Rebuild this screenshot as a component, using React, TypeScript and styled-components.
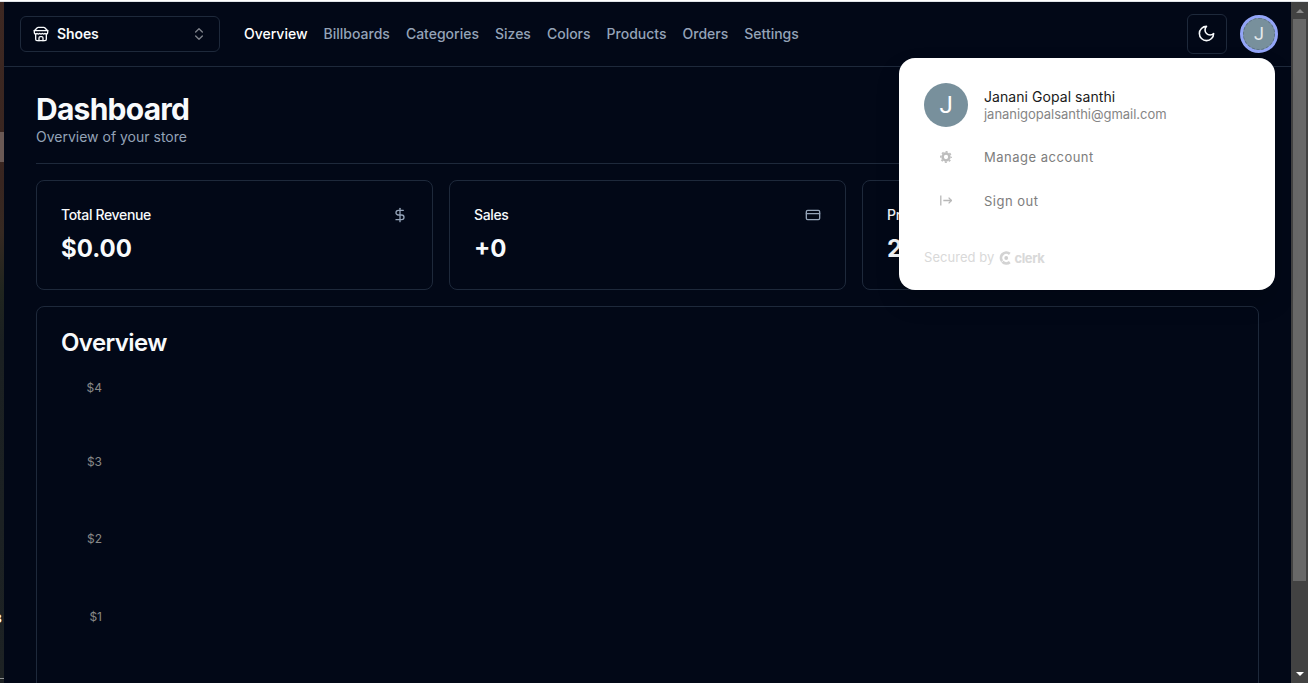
import React from "react";
import styled, { createGlobalStyle } from "styled-components";
import { ChevronsUpDown, DollarSign, CreditCard } from "lucide-react";

const GlobalStyle = createGlobalStyle`
  *, *::before, *::after { box-sizing: border-box; }
  html, body { margin: 0; height: 683px; overflow: hidden; background: #020817; }
  body { font-family: Inter, "Liberation Sans", sans-serif; color: #f8fafc; font-size: 14px; }
  h1, h2, h3, p { margin: 0; }
  button { font: inherit; color: inherit; cursor: pointer; }
`;

const Screen = styled.div`
  height: 683px;
  display: flex;
  flex-direction: column;
  overflow: hidden;
`;

const TopEdge = styled.div`
  flex: none;
  height: 2px;
  background: linear-gradient(#ffffff 50%, #dfe3e8 50%);
`;

const Body = styled.div`
  flex: 1;
  min-height: 0;
  display: flex;
`;

const Backdrop = styled.div`
  flex: none;
  width: 4px;
  overflow: hidden;
  padding-top: 130px;
  background: linear-gradient(#3e2822 0, #382520 180px, #362922 230px, #20251f 290px, #1b2022 340px, #1d2224 100%);
`;

const BackdropMark = styled.div`
  height: 30px;
  background: #6a5955;
`;

const BackdropText = styled.div`
  margin: 448px 0 0 -6px;
  font-size: 12px;
  line-height: 18px;
  font-weight: 700;
  color: #ffffff;
`;

const BackdropRule = styled.div`
  margin-top: 50px;
  height: 1px;
  background: #8f9293;
`;

const Page = styled.div`
  flex: 1;
  min-width: 0;
  background: #020817;
`;

const Header = styled.header`
  position: relative;
  height: 65px;
  display: flex;
  align-items: center;
  padding: 0 13px 0 16px;
  border-bottom: 1px solid #1e293b;
`;

const StoreSwitcher = styled.button`
  width: 200px;
  height: 36px;
  display: flex;
  align-items: center;
  padding: 0 12px;
  border: 1px solid #1e293b;
  border-radius: 6px;
  background: transparent;
  font-weight: 600;
  letter-spacing: -0.1px;
  line-height: 20px;
  & > svg:first-child { margin-right: 8px; }
  & > svg:last-child { margin-left: auto; opacity: 0.5; }
`;

const StoreName = styled.span`
  padding-bottom: 1px;
`;

const Nav = styled.nav`
  display: flex;
  align-items: center;
  gap: 16px;
  margin: 0 auto 0 24px;
`;

const NavLink = styled.a<{ $active?: boolean }>`
  font-weight: 500;
  line-height: 20px;
  color: ${(p) => (p.$active ? "#ffffff" : "#94a3b8")};
`;

const ThemeButton = styled.button`
  width: 40px;
  height: 40px;
  display: grid;
  place-items: center;
  margin-right: 13px;
  padding: 0 1px 1px 0;
  border: 1px solid #1e293b;
  border-radius: 6px;
  background: transparent;
`;

const Avatar = styled.span`
  flex: none;
  display: grid;
  place-items: center;
  width: 44px;
  height: 44px;
  border-radius: 50%;
  background: #78909c;
  color: #ffffff;
  font-family: Roboto, sans-serif;
  font-size: 24px;
  line-height: 1;
`;

const AvatarButton = styled(Avatar)`
  width: 38px;
  height: 38px;
  border: 3px solid #93a5f8;
  color: #e4e9eb;
  font-size: 18px;
  & > span {
    display: grid;
    place-items: center;
    width: 32px;
    height: 32px;
    border: 1px dashed #5f7486;
    border-radius: 50%;
  }
`;

const UserCard = styled.div`
  position: absolute;
  z-index: 2;
  top: 56px;
  right: 16px;
  width: 376px;
  height: 232px;
  padding: 25px 25px 24px;
  border-radius: 16px;
  background: #ffffff;
  color: #7d7d7d;
  box-shadow: 0 12px 24px rgba(0, 0, 0, 0.16);
`;

const Profile = styled.div`
  display: flex;
  align-items: center;
  gap: 16px;
  height: 44px;
`;

const ProfileName = styled.p`
  font-size: 14px;
  line-height: 18px;
  letter-spacing: 0.06px;
  color: #1a1a1a;
`;

const ProfileMail = styled.p`
  font-size: 13px;
  line-height: 17px;
  letter-spacing: -0.03px;
  color: #858585;
`;

const MenuItem = styled.div`
  display: flex;
  align-items: center;
  gap: 16px;
  height: 44px;
  font-size: 13px;
  letter-spacing: 0.5px;
  & > span:first-child {
    width: 44px;
    display: grid;
    place-items: center;
  }
`;

const MenuList = styled.div`
  padding-top: 8px;
`;

const Secured = styled.div`
  display: flex;
  align-items: center;
  gap: 5px;
  margin-top: 22px;
  height: 24px;
  font-size: 13px;
  letter-spacing: 0.05px;
  color: #d9d9d9;
`;

const ClerkBrand = styled.span`
  display: flex;
  align-items: center;
  gap: 3px;
  padding-top: 1px;
  font-weight: 700;
  letter-spacing: -0.4px;
`;

const Main = styled.main`
  display: flex;
  flex-direction: column;
  gap: 16px;
  padding: 24px 32px;
`;

const Title = styled.h1`
  font-size: 30px;
  line-height: 36px;
  font-weight: 700;
  letter-spacing: -0.75px;
`;

const Subtitle = styled.p`
  line-height: 20px;
  color: #94a3b8;
`;

const Separator = styled.div`
  height: 1px;
  background: #1e293b;
`;

const Stats = styled.div`
  display: grid;
  grid-template-columns: repeat(3, 1fr);
  gap: 16px;
`;

const Card = styled.section`
  padding: 24px;
  border: 1px solid #1e293b;
  border-radius: 8px;
`;

const CardHead = styled.div`
  display: flex;
  align-items: center;
  justify-content: space-between;
  height: 20px;
  margin-bottom: 8px;
  & > svg { color: #94a3b8; }
`;

const CardTitle = styled.h3`
  font-size: 14px;
  line-height: 20px;
  font-weight: 500;
  letter-spacing: -0.35px;
`;

const CardValue = styled.div`
  font-size: 24px;
  line-height: 32px;
  font-weight: 700;
`;

const ChartTitle = styled.h2`
  font-size: 24px;
  line-height: 24px;
  font-weight: 600;
  letter-spacing: -0.6px;
  margin-bottom: 24px;
`;

const Chart = styled.svg`
  display: block;
  width: 100%;
  height: 350px;
  font-size: 12px;
  fill: #888888;
`;

const ScrollBar = styled.div`
  flex: none;
  width: 17px;
  display: flex;
  flex-direction: column;
  align-items: center;
  background: #424242;
`;

const ScrollArrow = styled.div<{ $down?: boolean }>`
  height: 17px;
  display: grid;
  place-items: center;
  margin-top: ${(p) => (p.$down ? "auto" : "0")};
  padding-bottom: ${(p) => (p.$down ? "2px" : "0")};
  color: ${(p) => (p.$down ? "#ffffff" : "#8a8a8a")};
`;

const ScrollThumb = styled.div`
  width: 13px;
  height: 562px;
  background: #686868;
`;

const links = ["Overview", "Billboards", "Categories", "Sizes", "Colors", "Products", "Orders", "Settings"];

const stats = [
  { title: "Total Revenue", value: "$0.00", icon: <DollarSign size={16} /> },
  { title: "Sales", value: "+0", icon: <CreditCard size={16} /> },
  { title: "Products In Stock", value: "2", icon: null },
];

const ticks = [
  { label: "$4", y: 13 },
  { label: "$3", y: 87 },
  { label: "$2", y: 164 },
  { label: "$1", y: 242 },
];

const StoreIcon = () => (
  <svg width="16" height="16" viewBox="0 0 24 24" fill="none" stroke="currentColor" strokeWidth="2" strokeLinecap="round" strokeLinejoin="round">
    <path d="m2 7 4.41-4.41A2 2 0 0 1 7.83 2h8.34a2 2 0 0 1 1.42.59L22 7" />
    <path d="M4 12v8a2 2 0 0 0 2 2h12a2 2 0 0 0 2-2v-8" />
    <path d="M15 22v-4a2 2 0 0 0-2-2h-2a2 2 0 0 0-2 2v4" />
    <path d="M2 7h20" />
    <path d="M22 7v3a2 2 0 0 1-2 2 2.7 2.7 0 0 1-1.59-.63.7.7 0 0 0-.82 0A2.7 2.7 0 0 1 16 12a2.7 2.7 0 0 1-1.59-.63.7.7 0 0 0-.82 0A2.7 2.7 0 0 1 12 12a2.7 2.7 0 0 1-1.59-.63.7.7 0 0 0-.82 0A2.7 2.7 0 0 1 8 12a2.7 2.7 0 0 1-1.59-.63.7.7 0 0 0-.82 0A2.7 2.7 0 0 1 4 12a2 2 0 0 1-2-2V7" />
  </svg>
);

const MoonIcon = () => (
  <svg width="19" height="19" viewBox="0 0 24 24" fill="none" stroke="currentColor" strokeWidth="2" strokeLinecap="round" strokeLinejoin="round">
    <path d="M12 3a6 6 0 0 0 9 9 9 9 0 1 1-9-9Z" />
  </svg>
);

const GearIcon = () => (
  <svg width="12" height="12" viewBox="0 0 12 12" fill="none" stroke="#bdbdbd">
    <circle cx="6" cy="6" r="3.4" strokeWidth="2.5" />
    <circle cx="6" cy="6" r="5.2" strokeWidth="1.5" strokeDasharray="2.04 2.04" strokeDashoffset="1.02" />
  </svg>
);

const SignOutIcon = () => (
  <svg width="12" height="12" viewBox="0 0 12 12" fill="none" stroke="#b8b8b8" strokeWidth="1.3">
    <path d="M.8 .5v10M3.3 5.5h8.2M8.6 2.6l2.9 2.9-2.9 2.9" />
  </svg>
);

const ClerkIcon = () => (
  <svg width="12" height="14" viewBox="0 0 12 14" fill="none">
    <path d="M10.8 2.8A5.4 5.4 0 1 0 10.8 11.2" stroke="#d3d3d3" strokeWidth="2.8" />
    <path d="M2 11.8 5.2 8.6" stroke="#ffffff" strokeWidth=".8" />
    <circle cx="7.2" cy="7" r="1.9" fill="#cfcfcf" />
  </svg>
);

const UserMenu = () => (
  <UserCard>
    <Profile>
      <Avatar>J</Avatar>
      <div>
        <ProfileName>Janani Gopal santhi</ProfileName>
        <ProfileMail>jananigopalsanthi@gmail.com</ProfileMail>
      </div>
    </Profile>
    <MenuList>
      <MenuItem><span><GearIcon /></span><span>Manage account</span></MenuItem>
      <MenuItem><span><SignOutIcon /></span><span>Sign out</span></MenuItem>
    </MenuList>
    <Secured>
      <span>Secured by</span>
      <ClerkBrand><ClerkIcon />clerk</ClerkBrand>
    </Secured>
  </UserCard>
);

export default function App() {
  return (
    <Screen>
      <GlobalStyle />
      <TopEdge />
      <Body>
        <Backdrop>
          <BackdropMark />
          <BackdropText>8</BackdropText>
          <BackdropRule />
        </Backdrop>
        <Page>
          <Header>
            <StoreSwitcher>
              <StoreIcon />
              <StoreName>Shoes</StoreName>
              <ChevronsUpDown size={16} />
            </StoreSwitcher>
            <Nav>
              {links.map((l, i) => (
                <NavLink key={l} $active={i === 0}>{l}</NavLink>
              ))}
            </Nav>
            <ThemeButton><MoonIcon /></ThemeButton>
            <AvatarButton><span>J</span></AvatarButton>
            <UserMenu />
          </Header>
          <Main>
            <div>
              <Title>Dashboard</Title>
              <Subtitle>Overview of your store</Subtitle>
            </div>
            <Separator />
            <Stats>
              {stats.map((s) => (
                <Card key={s.title}>
                  <CardHead><CardTitle>{s.title}</CardTitle>{s.icon}</CardHead>
                  <CardValue>{s.value}</CardValue>
                </Card>
              ))}
            </Stats>
            <Card>
              <ChartTitle>Overview</ChartTitle>
              <Chart>
                {ticks.map((t) => (
                  <text key={t.label} x="41" y={t.y} textAnchor="end">{t.label}</text>
                ))}
              </Chart>
            </Card>
          </Main>
        </Page>
        <ScrollBar>
          <ScrollArrow>
            <svg width="8" height="4" viewBox="0 0 8 4" fill="currentColor"><path d="M0 4 4 0l4 4z" /></svg>
          </ScrollArrow>
          <ScrollThumb />
          <ScrollArrow $down>
            <svg width="8" height="4" viewBox="0 0 8 4" fill="currentColor"><path d="M0 0h8L4 4z" /></svg>
          </ScrollArrow>
        </ScrollBar>
      </Body>
    </Screen>
  );
}
